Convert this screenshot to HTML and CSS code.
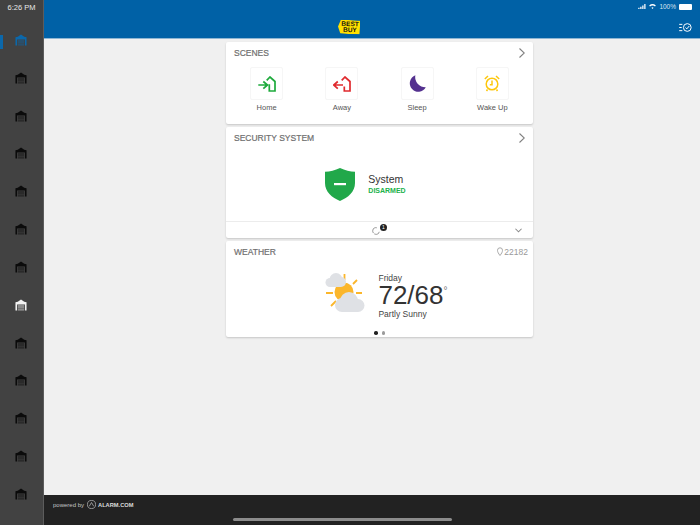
FILE: index.html
```html
<!DOCTYPE html>
<html>
<head>
    <meta charset="UTF-8">
    <meta name="viewport" content="width=device-width, initial-scale=1.0">
    <title>Best Buy Totaltech</title>
    <link rel="stylesheet" href="styles.css">
</head>
<body>

    <svg class="sprites" width="0" height="0">
        <symbol id="garage" viewBox="0 0 13 13">
            <path fill-rule="evenodd" d="M6.5 0.5 L10 3 L12.5 3.6 V12.5 H10.8 V6 H2.2 V12.5 H0.5 V3.6 L3 3 Z"/>
            <path d="M3 6.8 H10 V8.3 H3 Z M3 8.9 H10 V10.4 H3 Z M3 11 H10 V12.5 H3 Z" opacity="0.55"/>
        </symbol>
    </svg>

    <aside class="sidebar">
        <div class="time">6:26 PM</div>
        <div class="side-item active"><svg class="garage"><use href="#garage"/></svg></div>
        <div class="side-item"><svg class="garage"><use href="#garage"/></svg></div>
        <div class="side-item"><svg class="garage"><use href="#garage"/></svg></div>
        <div class="side-item"><svg class="garage"><use href="#garage"/></svg></div>
        <div class="side-item"><svg class="garage"><use href="#garage"/></svg></div>
        <div class="side-item"><svg class="garage"><use href="#garage"/></svg></div>
        <div class="side-item"><svg class="garage"><use href="#garage"/></svg></div>
        <div class="side-item current"><svg class="garage"><use href="#garage"/></svg></div>
        <div class="side-item"><svg class="garage"><use href="#garage"/></svg></div>
        <div class="side-item"><svg class="garage"><use href="#garage"/></svg></div>
        <div class="side-item"><svg class="garage"><use href="#garage"/></svg></div>
        <div class="side-item"><svg class="garage"><use href="#garage"/></svg></div>
        <div class="side-item"><svg class="garage"><use href="#garage"/></svg></div>
    </aside>

    <div class="main">
        <header class="header">
            <div class="status">
                <svg width="8" height="5" viewBox="0 0 9 6" fill="#fff">
                    <path d="M0 4.500h1.500v1.500H0zM2.400 3.200h1.500V6H2.400zM4.800 1.700h1.500V6H4.800zM7.200 0h1.500v6H7.200z"/>
                </svg>
                <svg width="7" height="5" viewBox="0 0 8 6" fill="#fff">
                    <path d="M4 6 L2.700 4.400 A2 2 0 0 1 5.300 4.400 Z M0 1.900 A6 6 0 0 1 8 1.900 L7 3 A4.500 4.500 0 0 0 1 3 Z"/>
                </svg>
                <span>100%</span>
                <span class="battery"></span>
            </div>
            <div class="header-row">
                <div class="logo"><span>BEST<br>BUY</span></div>
                <svg class="check-icon" width="13" height="9" viewBox="0 0 14 10" fill="none" stroke="#fff" stroke-width="1.100">
                    <path d="M0 1.500h3.500M0 5h2.800M0 8.500h3.500"/>
                    <circle cx="9" cy="5" r="4.300"/>
                    <path d="M7 5.100 L8.500 6.500 L11.200 3.300"/>
                </svg>
            </div>
        </header>

        <main class="content">
            <section class="card scenes">
                <div class="card-head">
                    <h2>SCENES</h2>
                    <svg class="chevron" width="6" height="10" viewBox="0 0 6 10" fill="none" stroke="#808080" stroke-width="1.100"><path d="M0.500 0.500 L5.300 5 L0.500 9.500"/></svg>
                </div>
                <div class="scene-grid">
                    <div class="scene">
                        <div class="tile">
                            <svg width="18" height="16" viewBox="0 0 18 16" fill="none" stroke="#1eaa3c" stroke-width="1.700">
                                <path d="M0.300 9H9.500M5.300 5.500 L9.500 9 L5.300 12.700"/>
                                <path d="M8.700 4.300 L12 1 L17 5.500 V15 H11.300 V8.300"/>
                            </svg>
                        </div>
                        <span>Home</span>
                    </div>
                    <div class="scene">
                        <div class="tile">
                            <svg width="18" height="16" viewBox="0 0 18 16" fill="none" stroke="#e02a2e" stroke-width="1.700">
                                <path d="M0.800 9H10M4.800 5.500 L0.800 9 L4.800 12.700"/>
                                <path d="M8.700 4.300 L12 1 L17 5.500 V15 H11.300 V10.500"/>
                            </svg>
                        </div>
                        <span>Away</span>
                    </div>
                    <div class="scene">
                        <div class="tile">
                            <svg width="17" height="17" viewBox="0 0 16 16" fill="#54318f">
                                <path d="M6 0.300 A8 8 0 1 0 15.800 11.600 A9.500 9.500 0 0 1 6 0.300 Z"/>
                            </svg>
                        </div>
                        <span>Sleep</span>
                    </div>
                    <div class="scene">
                        <div class="tile">
                            <svg width="16" height="17" viewBox="0 0 16 17" fill="none" stroke="#fdc70c" stroke-width="1.500">
                                <circle cx="8" cy="9" r="5.800"/>
                                <path d="M8 5.500V9.800H5.800"/>
                                <path d="M0.800 4 L4 1M15.200 4 L12 1M3.500 14.500 L2.500 16M12.500 14.500 L13.500 16"/>
                            </svg>
                        </div>
                        <span>Wake Up</span>
                    </div>
                </div>
            </section>

            <section class="card security">
                <div class="card-head">
                    <h2>SECURITY SYSTEM</h2>
                    <svg class="chevron" width="6" height="10" viewBox="0 0 6 10" fill="none" stroke="#808080" stroke-width="1.100"><path d="M0.500 0.500 L5.300 5 L0.500 9.500"/></svg>
                </div>
                <div class="system">
                    <svg width="30" height="33" viewBox="0 0 30 33">
                        <path d="M15 0 C20 2.500 25 3.500 30 3.800 V15 C30 24 23 29.500 15 33 C7 29.500 0 24 0 15 V3.800 C5 3.500 10 2.500 15 0 Z" fill="#21a84a"/>
                        <rect x="9" y="15" width="12" height="2.200" fill="#fff"/>
                    </svg>
                    <div class="system-text">
                        <div class="system-name">System</div>
                        <div class="system-state">DISARMED</div>
                    </div>
                </div>
                <div class="card-foot">
                    <div class="refresh">
                        <svg width="8" height="8" viewBox="0 0 8 8" fill="none" stroke="#8a8a8a" stroke-width="0.900"><path d="M4.800 0.800 A3.300 3.300 0 1 0 7.200 4.800" stroke-dasharray="8 1"/></svg>
                        <span class="count">1</span>
                    </div>
                    <svg class="foot-arrow" width="7" height="5" viewBox="0 0 8 5" fill="none" stroke="#8a8a8a" stroke-width="1.200"><path d="M0.500 0.500 L4 4 L7.500 0.500"/></svg>
                </div>
            </section>

            <section class="card weather">
                <div class="card-head">
                    <h2>WEATHER</h2>
                    <div class="zip">
                        <svg width="6" height="9" viewBox="0 0 6 9" fill="none" stroke="#a8a8a8" stroke-width="1"><path d="M3 8.500 C1.500 6.500 0.500 5 0.500 3.300 A2.500 2.500 0 0 1 5.500 3.300 C5.500 5 4.500 6.500 3 8.500 Z"/></svg>
                        22182
                    </div>
                </div>
                <div class="forecast">
                    <svg width="40" height="40" viewBox="0 0 40 40">
                        <g stroke="#fbb62b" stroke-width="1.800">
                            <path d="M19.500 1V7M32 7 L28 11M31 20H37M1 20H8M11 28 L6 33"/>
                        </g>
                        <circle cx="19" cy="19" r="9.500" fill="#fbb62b"/>
                        <g fill="#dfe1e5">
                            <circle cx="5" cy="9.500" r="4.500"/>
                            <circle cx="11" cy="6.500" r="6.500"/>
                            <circle cx="16" cy="9" r="5"/>
                            <rect x="5" y="8" width="11" height="6"/>
                            <circle cx="17" cy="32" r="7"/>
                            <circle cx="24" cy="28" r="9"/>
                            <circle cx="33" cy="32.500" r="6.500"/>
                            <rect x="17" y="30" width="16" height="9"/>
                        </g>
                    </svg>
                    <div class="forecast-text">
                        <div class="day">Friday</div>
                        <div class="temps">72/68<sup>°</sup></div>
                        <div class="day sky">Partly Sunny</div>
                    </div>
                </div>
                <div class="dots"><span class="dot on"></span><span class="dot"></span></div>
            </section>
        </main>

        <footer class="footer">
            <span>powered by</span>
            <svg width="9" height="9" viewBox="0 0 10 10" fill="none" stroke="#bdbdbd" stroke-width="0.800"><circle cx="5" cy="5" r="4.500"/><path d="M2.500 7 L5 2.800 L7.500 7"/></svg>
            <b>ALARM.COM</b>
        </footer>
    </div>

    <div class="home-bar"></div>

</body>
</html>
```

FILE: styles.css
```css
* {
    box-sizing: border-box;
}
body {
    margin: 0;
    width: 700px;
    height: 525px;
    overflow: hidden;
    display: flex;
    font-family: "Liberation Sans", Arial, sans-serif;
    background-color: #f0f0f0;
}
.sprites {
    position: absolute;
}

/* left column */
.sidebar {
    width: 44px;
    height: 525px;
    flex-shrink: 0;
    background-color: #424242;
    border-right: 1px solid #5c5c5c;
}
.time {
    height: 21px;
    padding-top: 3px;
    color: #e8e8e8;
    font-size: 7.500px;
    text-align: center;
}
.side-item {
    height: 37.830px;
    display: flex;
    align-items: center;
    justify-content: center;
    color: #0b0b0b;
}
.garage {
    width: 12px;
    height: 12px;
    margin-right: 1px;
    fill: currentColor;
}
.side-item.active {
    color: #0b68ab;
    position: relative;
}
.side-item.active::before {
    content: "";
    position: absolute;
    left: 0;
    top: 14px;
    width: 3px;
    height: 14px;
    background-color: #0b68ab;
}
.side-item.current {
    color: #f2f2f2;
}

.main {
    flex: 1;
    display: flex;
    flex-direction: column;
    height: 525px;
}

/* top bar */
.header {
    height: 39px;
    background-color: #0061a6;
    border-bottom: 1px solid #8fb6d3;
    padding-right: 8px;
}
.status {
    height: 13px;
    display: flex;
    justify-content: flex-end;
    align-items: center;
    gap: 3px;
    color: #d8e6f1;
    font-size: 6.500px;
}
.battery {
    width: 13px;
    height: 6px;
    margin-left: 0;
    background-color: #fff;
    border-radius: 1px;
}
.header-row {
    display: flex;
    align-items: center;
    height: 28px;
}
.logo {
    margin-left: 294px;
    width: 22px;
    height: 14px;
    background-color: #ffe000;
    clip-path: polygon(12% 0, 100% 0, 100% 100%, 12% 100%, 0 50%);
    transform: rotate(2deg);
    display: flex;
    align-items: center;
    justify-content: center;
    padding-left: 2px;
    color: #111;
    font-size: 6.500px;
    font-weight: bold;
    line-height: 6px;
    text-align: center;
}
.check-icon {
    margin-left: auto;
}

/* cards */
.content {
    flex: 1;
    padding: 3px 0 0 182px;
    display: flex;
    flex-direction: column;
    gap: 3px;
}
.card {
    width: 307px;
    background-color: #fff;
    border-radius: 2px;
    box-shadow: 0 1px 2px rgba(0, 0, 0, 0.18);
}
.card-head {
    height: 21px;
    padding: 0 8px;
    display: flex;
    align-items: center;
    justify-content: space-between;
}
.card-head h2 {
    margin: 0;
    font-size: 8.500px;
    font-weight: normal;
    color: #6f6f6f;
    -webkit-text-stroke: 0.200px #6f6f6f;
}

.scenes {
    height: 82px;
}
.scene-grid {
    display: grid;
    grid-template-columns: repeat(4, 1fr);
    padding: 4px 3px 0;
}
.scene {
    display: flex;
    flex-direction: column;
    align-items: center;
    gap: 3px;
    font-size: 7.500px;
    color: #555;
}
.tile {
    width: 33px;
    height: 33px;
    display: flex;
    align-items: center;
    justify-content: center;
    border: 1px solid #f6f6f6;
    border-radius: 2px;
}

.security {
    height: 111px;
    display: flex;
    flex-direction: column;
}
.system {
    flex: 1;
    display: flex;
    align-items: center;
    justify-content: center;
    gap: 13px;
    margin-left: -28px;
}
.system-text {
    margin-top: -2px;
}
.system-name {
    font-size: 10.500px;
    color: #333;
}
.system-state {
    margin-top: 2px;
    font-size: 7px;
    font-weight: bold;
    color: #21b24b;
}
.card-foot {
    height: 17px;
    border-top: 1px solid #ececec;
    position: relative;
    display: flex;
    align-items: center;
    justify-content: center;
}
.refresh {
    position: relative;
    margin-left: -8px;
    margin-top: 2px;
    display: flex;
}
.count {
    position: absolute;
    left: 8.500px;
    top: -3.500px;
    width: 7px;
    height: 7px;
    border-radius: 50%;
    background-color: #222;
    color: #fff;
    font-size: 5px;
    line-height: 7px;
    text-align: center;
}
.foot-arrow {
    position: absolute;
    right: 11px;
    top: 6px;
}

.weather {
    height: 96px;
}
.zip {
    display: flex;
    align-items: center;
    gap: 1px;
    margin-right: -3px;
    font-size: 8.500px;
    color: #9a9a9a;
}
.forecast {
    display: flex;
    align-items: center;
    justify-content: center;
    gap: 13px;
    margin: 4px 0 0 14px;
    height: 54px;
}
.forecast-text {
    margin-top: 6px;
    color: #444;
}
.day {
    font-size: 8.500px;
    line-height: 8px;
}
.sky {
    margin-top: 2px;
}
.temps {
    font-size: 26px;
    line-height: 26px;
    color: #333;
}
.temps sup {
    font-size: 10px;
    line-height: 0;
    vertical-align: 10px;
    color: #777;
}
.dots {
    display: flex;
    justify-content: center;
    gap: 4px;
    margin-top: 11px;
}
.dot {
    width: 3.500px;
    height: 3.500px;
    border-radius: 50%;
    background-color: #9b9b9b;
}
.dot.on {
    background-color: #222;
}

/* bottom */
.footer {
    height: 30px;
    background-color: #222;
    padding: 0 0 11px 9px;
    display: flex;
    align-items: center;
    gap: 2px;
    color: #c4c4c4;
    font-size: 6px;
}
.footer span {
    margin-right: 1px;
}
.footer b {
    font-size: 5.700px;
    color: #ddd;
}
.home-bar {
    position: absolute;
    left: 233px;
    top: 518px;
    width: 219px;
    height: 2.500px;
    border-radius: 2px;
    background-color: #8c8c8c;
}
```
